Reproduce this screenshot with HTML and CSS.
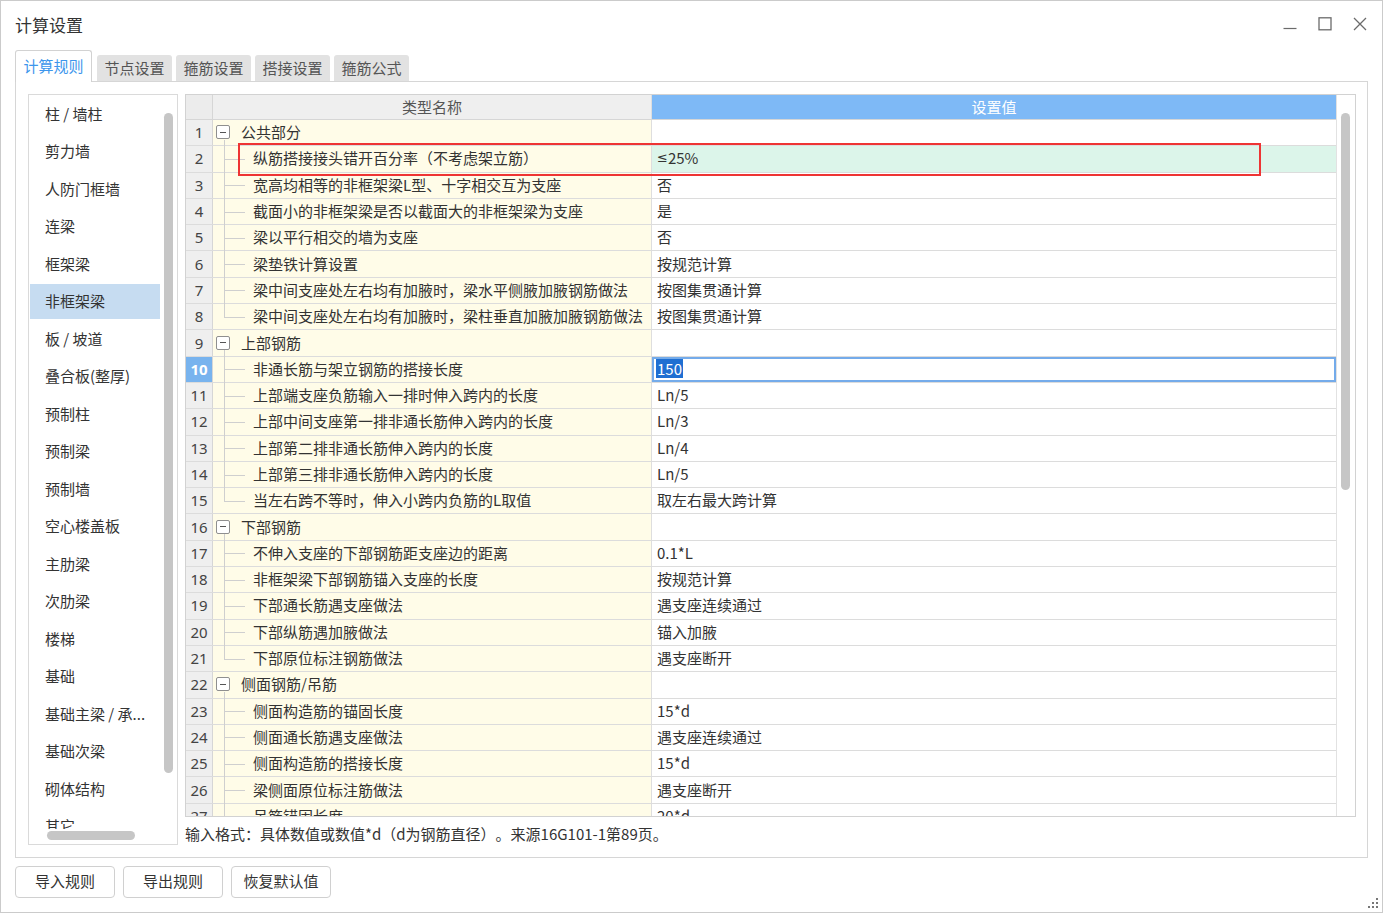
FILE: index.html
```html
<!DOCTYPE html>
<html lang="zh">
<head>
<meta charset="utf-8">
<title>计算设置</title>
<link rel="stylesheet" href="styles.css">
</head>
<body>
<div class="window">
  <div class="titlebar">
    <div class="title">计算设置</div>
    <div class="controls">
      <svg class="ctl" width="14" height="14" viewBox="0 0 14 14"><path d="M0.5 11.5H13.5" stroke="#6b6b6b" stroke-width="1.2"/></svg>
      <svg class="ctl" width="14" height="14" viewBox="0 0 14 14"><rect x="1" y="0.8" width="12" height="12" fill="none" stroke="#6b6b6b" stroke-width="1.3"/></svg>
      <svg class="ctl" width="14" height="14" viewBox="0 0 14 14"><path d="M1 1L13 13M13 1L1 13" stroke="#6b6b6b" stroke-width="1.3"/></svg>
    </div>
  </div>

  <div class="tabs">
    <div class="tab active">计算规则</div>
    <div class="tab first">节点设置</div>
    <div class="tab">箍筋设置</div>
    <div class="tab">搭接设置</div>
    <div class="tab">箍筋公式</div>
  </div>

  <div class="panel">
    <div class="side">
      <div class="side-main">
        <ul class="side-items">
          <li>柱 / 墙柱</li>
          <li>剪力墙</li>
          <li>人防门框墙</li>
          <li>连梁</li>
          <li>框架梁</li>
          <li class="sel">非框架梁</li>
          <li>板 / 坡道</li>
          <li>叠合板(整厚)</li>
          <li>预制柱</li>
          <li>预制梁</li>
          <li>预制墙</li>
          <li>空心楼盖板</li>
          <li>主肋梁</li>
          <li>次肋梁</li>
          <li>楼梯</li>
          <li>基础</li>
          <li>基础主梁 / 承...</li>
          <li>基础次梁</li>
          <li>砌体结构</li>
          <li>其它</li>
        </ul>
        <div class="side-vs"><div class="vthumb"></div></div>
      </div>
      <div class="side-hs"><div class="hthumb"></div></div>
    </div>

    <div class="main">
      <div class="table">
        <div class="grid">
          <div class="row head">
            <div class="num"></div>
            <div class="name">类型名称</div>
            <div class="val">设置值</div>
          </div>

          <div class="row"><div class="num">1</div><div class="name g"><span class="box"></span>公共部分</div><div class="val"></div></div>
          <div class="row"><div class="num">2</div><div class="name c">纵筋搭接接头错开百分率（不考虑架立筋）</div><div class="val mint"><span class="le">≤</span>25%</div></div>
          <div class="row"><div class="num">3</div><div class="name c">宽高均相等的非框架梁L型、十字相交互为支座</div><div class="val">否</div></div>
          <div class="row"><div class="num">4</div><div class="name c">截面小的非框架梁是否以截面大的非框架梁为支座</div><div class="val">是</div></div>
          <div class="row"><div class="num">5</div><div class="name c">梁以平行相交的墙为支座</div><div class="val">否</div></div>
          <div class="row"><div class="num">6</div><div class="name c">梁垫铁计算设置</div><div class="val">按规范计算</div></div>
          <div class="row"><div class="num">7</div><div class="name c">梁中间支座处左右均有加腋时，梁水平侧腋加腋钢筋做法</div><div class="val">按图集贯通计算</div></div>
          <div class="row"><div class="num">8</div><div class="name c last">梁中间支座处左右均有加腋时，梁柱垂直加腋加腋钢筋做法</div><div class="val">按图集贯通计算</div></div>
          <div class="row"><div class="num">9</div><div class="name g"><span class="box"></span>上部钢筋</div><div class="val"></div></div>
          <div class="row"><div class="num cur">10</div><div class="name c">非通长筋与架立钢筋的搭接长度</div><div class="val edit"><span class="selected">150</span></div></div>
          <div class="row"><div class="num">11</div><div class="name c">上部端支座负筋输入一排时伸入跨内的长度</div><div class="val">Ln/5</div></div>
          <div class="row"><div class="num">12</div><div class="name c">上部中间支座第一排非通长筋伸入跨内的长度</div><div class="val">Ln/3</div></div>
          <div class="row"><div class="num">13</div><div class="name c">上部第二排非通长筋伸入跨内的长度</div><div class="val">Ln/4</div></div>
          <div class="row"><div class="num">14</div><div class="name c">上部第三排非通长筋伸入跨内的长度</div><div class="val">Ln/5</div></div>
          <div class="row"><div class="num">15</div><div class="name c last">当左右跨不等时，伸入小跨内负筋的L取值</div><div class="val">取左右最大跨计算</div></div>
          <div class="row"><div class="num">16</div><div class="name g"><span class="box"></span>下部钢筋</div><div class="val"></div></div>
          <div class="row"><div class="num">17</div><div class="name c">不伸入支座的下部钢筋距支座边的距离</div><div class="val">0.1*L</div></div>
          <div class="row"><div class="num">18</div><div class="name c">非框架梁下部钢筋锚入支座的长度</div><div class="val">按规范计算</div></div>
          <div class="row"><div class="num">19</div><div class="name c">下部通长筋遇支座做法</div><div class="val">遇支座连续通过</div></div>
          <div class="row"><div class="num">20</div><div class="name c">下部纵筋遇加腋做法</div><div class="val">锚入加腋</div></div>
          <div class="row"><div class="num">21</div><div class="name c last">下部原位标注钢筋做法</div><div class="val">遇支座断开</div></div>
          <div class="row"><div class="num">22</div><div class="name g"><span class="box"></span>侧面钢筋/吊筋</div><div class="val"></div></div>
          <div class="row"><div class="num">23</div><div class="name c">侧面构造筋的锚固长度</div><div class="val">15*d</div></div>
          <div class="row"><div class="num">24</div><div class="name c">侧面通长筋遇支座做法</div><div class="val">遇支座连续通过</div></div>
          <div class="row"><div class="num">25</div><div class="name c">侧面构造筋的搭接长度</div><div class="val">15*d</div></div>
          <div class="row"><div class="num">26</div><div class="name c">梁侧面原位标注筋做法</div><div class="val">遇支座断开</div></div>
          <div class="row"><div class="num">27</div><div class="name c">吊筋锚固长度</div><div class="val">20*d</div></div>

          <div class="redbox"></div>
        </div>
        <div class="table-vs"><div class="vthumb tall"></div></div>
      </div>
      <div class="note">输入格式：具体数值或数值*d（d为钢筋直径）。来源16G101-1第89页。</div>
    </div>
  </div>

  <div class="buttons">
    <button class="btn">导入规则</button>
    <button class="btn">导出规则</button>
    <button class="btn">恢复默认值</button>
  </div>

  <svg class="grip" width="11" height="11" viewBox="0 0 11 11">
    <rect x="8" y="0" width="2" height="2" fill="#777"/>
    <rect x="4" y="4" width="2" height="2" fill="#777"/>
    <rect x="8" y="4" width="2" height="2" fill="#777"/>
    <rect x="0" y="8" width="2" height="2" fill="#777"/>
    <rect x="4" y="8" width="2" height="2" fill="#777"/>
    <rect x="8" y="8" width="2" height="2" fill="#777"/>
  </svg>
</div>
</body>
</html>
```

FILE: styles.css
```css
* { box-sizing: border-box; }

html, body {
  margin: 0;
  padding: 0;
  background: #ffffff;
}

body {
  font-family: "Noto Sans CJK SC", "Noto Sans", sans-serif;
  color: #333333;
  text-spacing-trim: space-all;
  font-feature-settings: "chws" 0, "halt" 0;
}

.window {
  position: relative;
  width: 1383px;
  height: 913px;
  border: 1px solid #cbcbcb;
  background: #ffffff;
}

/* ---------- title bar ---------- */
.titlebar {
  height: 49px;
  display: flex;
  align-items: center;
  padding: 0 15px 0 14px;
}

.title {
  font-size: 17px;
  color: #333;
  line-height: 20px;
  margin-top: -1px;
}

.controls {
  margin-left: auto;
  display: flex;
  gap: 21px;
  align-items: center;
  margin-top: -3px;
}

.ctl { display: block; }

/* ---------- tabs ---------- */
.tabs {
  height: 31px;
  display: flex;
  align-items: flex-end;
  padding-left: 14px;
}

.tab {
  height: 26px;
  width: 75px;
  margin-left: 4px;
  background: #e2e2e2;
  border-radius: 3px 3px 0 0;
  font-size: 15px;
  line-height: 25px;
  text-align: center;
  color: #555;
}

.tab.first { margin-left: 5px; }

.tab.active {
  position: relative;
  z-index: 1;
  margin-left: 0;
  width: 77px;
  height: 32px;
  margin-bottom: -1px;
  background: #ffffff;
  border: 1px solid #d2d2d2;
  border-bottom: none;
  color: #3d96ec;
  line-height: 30px;
}

/* ---------- panel ---------- */
.panel {
  margin-left: 14px;
  width: 1353px;
  height: 777px;
  border: 1px solid #d6d6d6;
  padding: 12px 11px 12px 12px;
  display: flex;
  gap: 7px;
}

/* side list */
.side {
  width: 150px;
  height: 751px;
  border: 1px solid #dadada;
  display: flex;
  flex-direction: column;
}

.side-main {
  height: 734px;
  display: flex;
}

.side-items {
  list-style: none;
  margin: 0;
  padding: 1.5px 0 0 1px;
  flex: 1;
  overflow: hidden;
}

.side-items li {
  height: 35px;
  margin-bottom: 2.5px;
  padding-left: 15px;
  font-size: 15px;
  line-height: 33px;
  color: #333;
  white-space: nowrap;
}

.side-items li.sel {
  background: #c6dcf1;
}

.side-vs {
  width: 17px;
  padding: 18px 4px 0 4px;
}

.vthumb {
  width: 9px;
  height: 660px;
  background: #c6c6c6;
  border-radius: 5px;
}

.side-hs {
  height: 15px;
  padding: 2px 0 0 18px;
}

.hthumb {
  width: 88px;
  height: 9px;
  background: #c6c6c6;
  border-radius: 5px;
}

/* main */
.main {
  width: 1171px;
  display: flex;
  flex-direction: column;
}

.table {
  height: 723px;
  border: 1px solid #d2d2d2;
  display: flex;
}

.grid {
  position: relative;
  width: 1150px;
  overflow: hidden;
}

.row {
  display: flex;
  height: 26.3px;
  border-bottom: 1px solid #dcdcdc;
  font-size: 15px;
  line-height: 22px;
}

.row > div {
  display: flex;
  align-items: center;
  white-space: nowrap;
  padding-bottom: 1px;
}

.num {
  width: 27px;
  flex: none;
  justify-content: center;
  background: #efefef;
  border-right: 1px solid #d6d6d6;
  color: #444;
  font-family: "Noto Sans", "Open Sans", sans-serif;
  font-size: 15px;
}

.num.cur {
  background: #78b3ee;
  color: #ffffff;
  font-weight: bold;
}

.name {
  position: relative;
  width: 439px;
  flex: none;
  background: #fffce8;
  border-right: 1px solid #dedede;
  color: #333;
}

.val {
  width: 684px;
  flex: none;
  padding-left: 5px;
  color: #333;
  background: #ffffff;
}

.val.mint { background: #dcf5ea; }

.le {
  font-family: "DejaVu Sans", "Liberation Sans", sans-serif;
  font-size: 13px;
}

.val.edit {
  box-shadow: inset 0 0 0 2px #74abea;
  padding-left: 4px;
}

.selected {
  background: #1f6fd2;
  color: #ffffff;
  line-height: 19px;
  padding: 0 1px;
}

/* header */
.row.head {
  height: 25px;
  border-bottom: 1px solid #d6d6d6;
}

.row.head .num { background: #ececec; }

.row.head .name {
  justify-content: center;
  background: #efefef;
  color: #555;
}

.row.head .val {
  justify-content: center;
  padding-left: 0;
  background: #7eb9f6;
  color: #ffffff;
}

/* tree */
.name.g { padding-left: 3px; }

.box {
  position: relative;
  width: 14px;
  height: 14px;
  border: 1px solid #8f8f8f;
  border-radius: 2px;
  margin-right: 11px;
  background: #fff;
}

.box::after {
  content: "";
  position: absolute;
  left: 3px;
  top: 5.5px;
  width: 6px;
  height: 1px;
  background: #555;
}

.name.g::after {
  content: "";
  position: absolute;
  left: 11px;
  top: calc(50% + 7px);
  bottom: -1px;
  width: 1px;
  background: #cfcfcf;
}

.name.c { padding-left: 40px; }

.name.c::before {
  content: "";
  position: absolute;
  left: 11px;
  top: 0;
  bottom: -1px;
  width: 1px;
  background: #cfcfcf;
}

.name.c.last::before { bottom: 50%; }

.name.c::after {
  content: "";
  position: absolute;
  left: 11px;
  top: 50%;
  width: 21px;
  height: 1px;
  background: #cfcfcf;
}

.redbox {
  position: absolute;
  left: 52px;
  top: 48px;
  width: 1023px;
  height: 33px;
  border: 2px solid #ee3434;
}

.table-vs {
  width: 19px;
  border-left: 1px solid #e2e2e2;
  padding: 18px 0 0 4px;
}

.vthumb.tall { height: 377px; }

.note {
  margin-top: 7px;
  font-size: 15px;
  line-height: 20px;
  color: #333;
}

/* buttons */
.buttons {
  display: flex;
  gap: 8px;
  padding-left: 14px;
  margin-top: 8px;
}

.btn {
  width: 100px;
  height: 32px;
  border: 1px solid #d0d0d0;
  border-radius: 4px;
  background: #ffffff;
  font-family: "Noto Sans CJK SC", sans-serif;
  font-size: 15px;
  line-height: 28px;
  color: #333;
  padding: 0 0 2px 0;
}

.grip {
  position: absolute;
  right: 3px;
  bottom: 3px;
}
```
